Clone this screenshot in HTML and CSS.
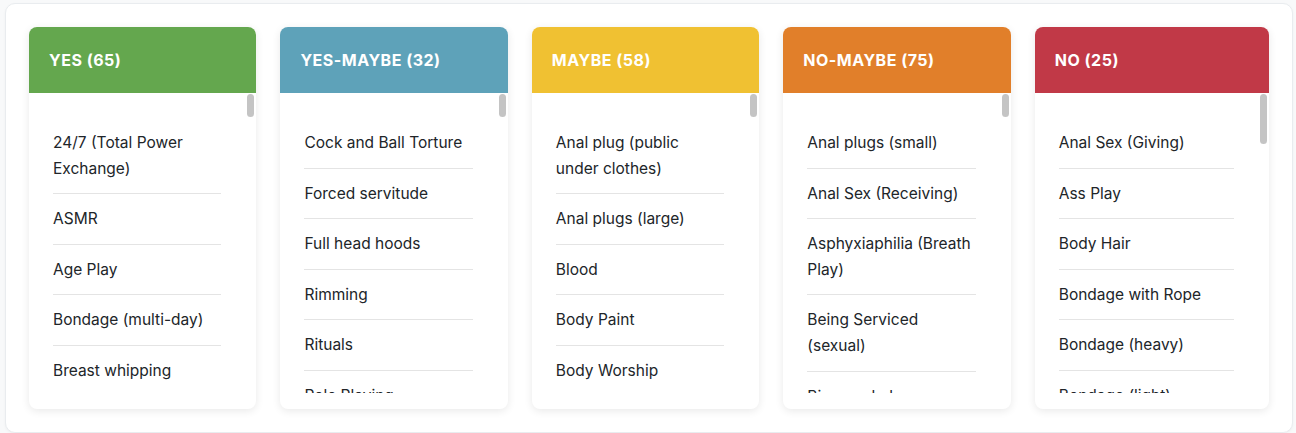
FILE: index.html
```html
<!DOCTYPE html>
<html lang="en">
<head>
<meta charset="utf-8">
<title>Results board</title>
<link rel="stylesheet" href="styles.css">
</head>
<body>
<div class="board">
  <section class="card">
    <header class="card-head head-yes">YES (65)</header>
    <div class="card-body">
      <ul class="items">
        <li>24/7 (Total Power Exchange)</li>
        <li>ASMR</li>
        <li>Age Play</li>
        <li>Bondage (multi-day)</li>
        <li>Breast whipping</li>
        <li>Caning</li>
        <li>Choking</li>
        <li>Collars</li>
        <li>Corsets</li>
        <li>Cuddling</li>
        <li>Cuffs</li>
        <li>Dirty talk</li>
        <li>Discipline</li>
        <li>Edging</li>
        <li>Eye contact</li>
        <li>Feathers</li>
        <li>Flogging</li>
        <li>Foot worship</li>
        <li>Gags</li>
        <li>Hair pulling</li>
        <li>Handcuffs</li>
        <li>Ice play</li>
        <li>Kissing</li>
        <li>Leather</li>
        <li>Lingerie</li>
        <li>Massage</li>
        <li>Name calling</li>
        <li>Nipple clamps</li>
        <li>Oral sex</li>
        <li>Orgasm control</li>
        <li>Paddling</li>
        <li>Praise</li>
        <li>Restraints</li>
        <li>Sensory deprivation</li>
        <li>Spanking</li>
        <li>Stockings</li>
        <li>Teasing</li>
        <li>Tickling</li>
        <li>Titles</li>
        <li>Toys</li>
        <li>Vibrators</li>
        <li>Wax play</li>
      </ul>
    </div>
    <span class="thumb"></span>
  </section>

  <section class="card">
    <header class="card-head head-yes-maybe">YES-MAYBE (32)</header>
    <div class="card-body">
      <ul class="items">
        <li>Cock and Ball Torture</li>
        <li>Forced servitude</li>
        <li>Full head hoods</li>
        <li>Rimming</li>
        <li>Rituals</li>
        <li>Role Playing</li>
        <li>Costumes</li>
        <li>Dildos</li>
        <li>Domestic service</li>
        <li>Forced orgasm</li>
        <li>Harnesses</li>
        <li>Impact play</li>
        <li>Latex</li>
        <li>Masks</li>
        <li>Mind games</li>
        <li>Nylons</li>
        <li>Outdoor sex</li>
        <li>Pet play</li>
        <li>Phone sex</li>
        <li>Primal play</li>
        <li>Punishment</li>
        <li>Spreader bars</li>
        <li>Strap-ons</li>
        <li>Uniforms</li>
        <li>Whipping</li>
        <li>Worship</li>
        <li>Blindfolds</li>
        <li>Body writing</li>
        <li>Collaring ceremony</li>
        <li>Dancing</li>
        <li>Photography</li>
        <li>Tease and denial</li>
      </ul>
    </div>
    <span class="thumb"></span>
  </section>

  <section class="card">
    <header class="card-head head-maybe">MAYBE (58)</header>
    <div class="card-body">
      <ul class="items">
        <li>Anal plug (public under clothes)</li>
        <li>Anal plugs (large)</li>
        <li>Blood</li>
        <li>Body Paint</li>
        <li>Body Worship</li>
        <li>Boot worship</li>
        <li>Candle wax</li>
        <li>Chastity devices</li>
        <li>Clamps</li>
        <li>Cling film</li>
        <li>Crops</li>
        <li>Electric play</li>
        <li>Erotic photography</li>
        <li>Exhibitionism</li>
        <li>Face slapping</li>
        <li>Food play</li>
        <li>Gloves</li>
        <li>Hoods</li>
        <li>Interrogation</li>
        <li>Medical play</li>
        <li>Mummification</li>
        <li>Public play</li>
        <li>Rope harness</li>
        <li>Shaving</li>
        <li>Suspension</li>
        <li>Voyeurism</li>
        <li>Auctions</li>
        <li>Animal role play</li>
        <li>Armpits</li>
        <li>Cages</li>
        <li>Feet</li>
        <li>Group play</li>
        <li>Hypnosis</li>
        <li>Kneeling</li>
        <li>Objectification</li>
        <li>Posture training</li>
        <li>Protocol</li>
        <li>Sounding</li>
        <li>Tattoos</li>
        <li>Wrestling</li>
      </ul>
    </div>
    <span class="thumb"></span>
  </section>

  <section class="card">
    <header class="card-head head-no-maybe">NO-MAYBE (75)</header>
    <div class="card-body">
      <ul class="items">
        <li>Anal plugs (small)</li>
        <li>Anal Sex (Receiving)</li>
        <li>Asphyxiaphilia (Breath Play)</li>
        <li>Being Serviced (sexual)</li>
        <li>Bi-sexual play</li>
        <li>Biting</li>
        <li>Breath control</li>
        <li>Caging</li>
        <li>Degradation</li>
        <li>Enemas</li>
        <li>Fisting</li>
        <li>Genital piercing</li>
        <li>Humiliation</li>
        <li>Knife play</li>
        <li>Piercing</li>
        <li>Scratching</li>
        <li>Verbal abuse</li>
        <li>Abrasion</li>
        <li>Age gap play</li>
        <li>Bruising</li>
        <li>Cross-dressing</li>
        <li>Diapers</li>
        <li>Figging</li>
        <li>Forced feminization</li>
        <li>Gas masks</li>
        <li>Kidnapping scenes</li>
        <li>Little space</li>
        <li>Mouth soaping</li>
        <li>Pony play</li>
        <li>Public humiliation</li>
        <li>Queening</li>
        <li>Sharing</li>
        <li>Smothering</li>
        <li>Swapping</li>
        <li>Threesomes</li>
        <li>Trampling</li>
        <li>Urethral play</li>
        <li>Vacuum beds</li>
        <li>Water bondage</li>
        <li>Xenophilia</li>
      </ul>
    </div>
    <span class="thumb"></span>
  </section>

  <section class="card">
    <header class="card-head head-no">NO (25)</header>
    <div class="card-body">
      <ul class="items">
        <li>Anal Sex (Giving)</li>
        <li>Ass Play</li>
        <li>Body Hair</li>
        <li>Bondage with Rope</li>
        <li>Bondage (heavy)</li>
        <li>Bondage (light)</li>
        <li>Branding</li>
        <li>Cutting</li>
        <li>Fire play</li>
        <li>Needles</li>
        <li>Scarification</li>
        <li>Watersports</li>
        <li>Blackmail scenes</li>
        <li>Chemical play</li>
        <li>Cuckolding</li>
        <li>Golden showers</li>
        <li>Gun play</li>
        <li>Infantilism</li>
        <li>Permanent marks</li>
        <li>Race play</li>
        <li>Saline injection</li>
        <li>Spitting</li>
        <li>Stapling</li>
        <li>Vomit play</li>
        <li>Zoophilia themes</li>
      </ul>
    </div>
    <span class="thumb thumb-long"></span>
  </section>
</div>
</body>
</html>
```

FILE: styles.css
```css
* {
  box-sizing: border-box;
}

html,
body {
  margin: 0;
  height: 100%;
}

body {
  background: #f8f9fa;
  padding: 3px 3px 0 5px;
  font-family: Inter, "Liberation Sans", Arial, sans-serif;
  color: #212529;
}

.board {
  background: #ffffff;
  border: 1px solid #e9ecef;
  border-radius: 10px;
  box-shadow: 0 1px 3px rgba(0, 0, 0, 0.04);
  padding: 23px;
  display: grid;
  grid-template-columns: repeat(4, minmax(0, 1fr)) minmax(0, 1.03fr);
  column-gap: 24px;
  align-items: start;
}

.card {
  position: relative;
  background: #ffffff;
  border-radius: 8px;
  box-shadow: 0 2px 8px rgba(0, 0, 0, 0.09);
  overflow: hidden;
  padding-bottom: 16px;
}

.card-head {
  height: 66px;
  display: flex;
  align-items: center;
  padding: 0 20px;
  color: #ffffff;
  font-weight: 700;
  font-size: 16px;
  letter-spacing: 0.5px;
}

.head-yes { background: #64a74e; }
.head-yes-maybe { background: #5ea2b9; }
.head-maybe { background: #f0c132; }
.head-no-maybe { background: #e17f2a; }
.head-no { background: #c13947; }

.card-body {
  height: 300px;
  overflow-y: auto;
  padding: 25px 35px 0 24px;
  scrollbar-width: none;
}

.card-body::-webkit-scrollbar {
  display: none;
}

/* overlay scroll indicator */
.thumb {
  position: absolute;
  top: 67px;
  right: 2px;
  width: 7px;
  height: 23px;
  border-radius: 4px;
  background: #c4c4c4;
}

.thumb-long {
  height: 50px;
}

.items {
  list-style: none;
  margin: 0;
  padding: 0;
}

.items li {
  padding: 12px 0;
  font-size: 15.5px;
  line-height: 25.6px;
  border-bottom: 1px solid #e4e4e4;
}
```
